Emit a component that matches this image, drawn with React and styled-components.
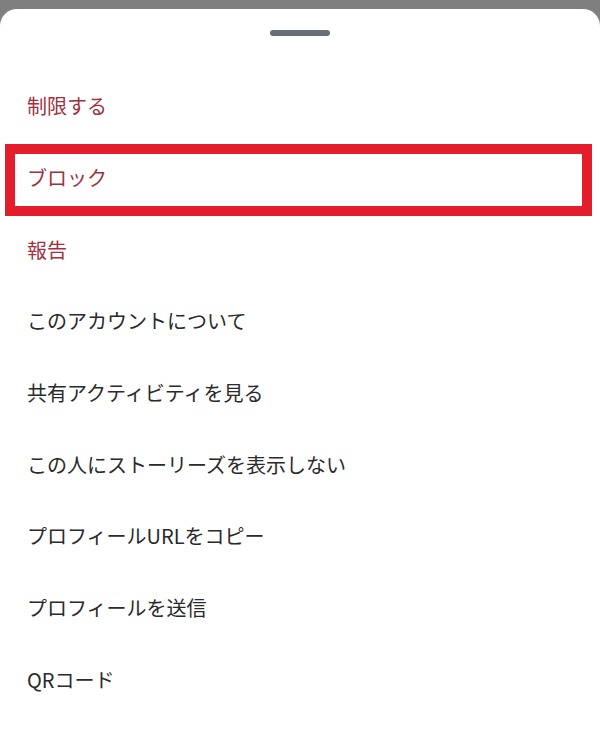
import React from 'react'
import styled, { createGlobalStyle } from 'styled-components'

const Global = createGlobalStyle`
  html, body {
    margin: 0;
    padding: 0;
    background: #7f7f7f;
  }
  body {
    font-family: "Noto Sans CJK JP", "Noto Sans", sans-serif;
  }
`

const Page = styled.div`
  width: 600px;
  height: 740px;
  padding-top: 9px;
  box-sizing: border-box;
  overflow: hidden;
`

const Sheet = styled.div`
  background: #fff;
  height: 100%;
  border-radius: 17px 17px 0 0;
  padding-top: 21px;
  box-sizing: border-box;
`

const Handle = styled.div`
  width: 60px;
  height: 6px;
  border-radius: 3px;
  background: #6a6f77;
  margin: 0 auto 34px;
`

const Menu = styled.ul`
  list-style: none;
  margin: 0;
  padding: 0;
`

const Item = styled.li`
  position: relative;
  height: 71.7px;
  display: flex;
  align-items: center;
  padding-left: 27px;
  font-size: 20px;
  color: ${p => (p.$danger ? '#a0323e' : '#2a2a2a')};

  ${p => p.$marked && `
    &::after {
      content: '';
      position: absolute;
      top: 2px;
      bottom: -3px;
      left: 5px;
      right: 8px;
      border: 10px solid #e31d2b;
    }
  `}
`

const items = [
  { label: '制限する', danger: true },
  { label: 'ブロック', danger: true, marked: true },
  { label: '報告', danger: true },
  { label: 'このアカウントについて' },
  { label: '共有アクティビティを見る' },
  { label: 'この人にストーリーズを表示しない' },
  { label: 'プロフィールURLをコピー' },
  { label: 'プロフィールを送信' },
  { label: 'QRコード' },
]

const App = () => {
  return (
    <>
      <Global />
      <Page>
        <Sheet>
          <Handle />
          <Menu>
            {items.map(it => (
              <Item key={it.label} $danger={it.danger} $marked={it.marked}>
                {it.label}
              </Item>
            ))}
          </Menu>
        </Sheet>
      </Page>
    </>
  )
}

export default App
